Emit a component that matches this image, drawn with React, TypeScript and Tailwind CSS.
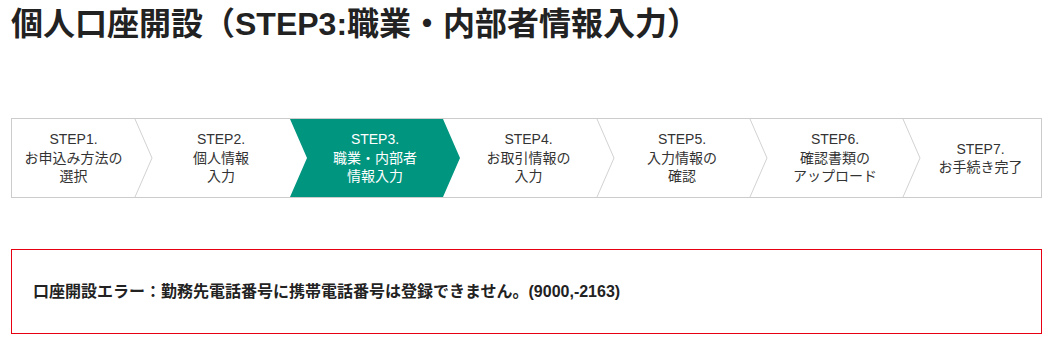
import React from "react";

type Step = {
  label: string;
  lines: string[];
  width: string;
  active?: boolean;
  first?: boolean;
  last?: boolean;
};

const steps: Step[] = [
  { label: "STEP1.", lines: ["お申込み方法の", "選択"], width: "w-[123px]", first: true },
  { label: "STEP2.", lines: ["個人情報", "入力"], width: "w-[155px]" },
  { label: "STEP3.", lines: ["職業・内部者", "情報入力"], width: "w-[153px]", active: true },
  { label: "STEP4.", lines: ["お取引情報の", "入力"], width: "w-[154px]" },
  { label: "STEP5.", lines: ["入力情報の", "確認"], width: "w-[153px]" },
  { label: "STEP6.", lines: ["確認書類の", "アップロード"], width: "w-[153px]" },
  { label: "STEP7.", lines: ["お手続き完了"], width: "w-[138px]", last: true },
];

// gray chevron drawn on the right edge of a white step
const Chevron = () => (
  <svg
    className="absolute top-0 left-full h-full w-[18px] overflow-visible"
    viewBox="0 0 18 78"
    preserveAspectRatio="none"
  >
    <polyline points="0,0 17,39 0,78" fill="white" stroke="#d2d2d2" strokeWidth="1" />
  </svg>
);

// green arrow body for the current step
const ActiveShape = () => (
  <svg
    className="absolute top-0 left-0 h-full w-[calc(100%+17px)]"
    viewBox="0 0 170 78"
    preserveAspectRatio="none"
  >
    <polygon points="0,0 153,0 170,39 153,78 0,78 17,39" fill="#00957f" />
  </svg>
);

const StepItem = ({ step, nextActive }: { step: Step; nextActive: boolean }) => (
  <div className={`relative flex h-full shrink-0 items-center justify-center ${step.width}`}>
    {step.active && <ActiveShape />}
    {!step.active && !step.last && !nextActive && <Chevron />}
    <div
      className={`relative z-10 flex h-full w-full flex-col items-center justify-center text-center text-[14px] leading-[18.5px] ${
        step.first ? "" : "pl-[17px]"
      } ${step.active ? "text-white" : "text-[#333333]"}`}
    >
      <span>{step.label}</span>
      {step.lines.map((line) => (
        <span key={line}>{line}</span>
      ))}
    </div>
  </div>
);

export default function App() {
  return (
    <div
      className="min-h-[342px] w-[1051px] bg-white pl-[11px] pr-[9px]"
      style={{ fontFamily: '"Liberation Sans", "Noto Sans CJK JP", sans-serif' }}
    >
      <h1 className="text-[32px] leading-[46px] font-bold text-[#222222] pt-[1px]">
        個人口座開設（STEP3:職業・内部者情報入力）
      </h1>

      {/* Step navigation */}
      <div className="mt-[71px] flex h-[80px] border border-solid border-[#cccccc] bg-white">
        {steps.map((step, i) => (
          <StepItem key={step.label} step={step} nextActive={!!steps[i + 1]?.active} />
        ))}
      </div>

      {/* Error message */}
      <div className="mt-[51px] flex h-[85px] items-center border border-solid border-[#e60012] pl-[21px]">
        <p className="text-[16px] font-bold text-[#222222]">
          口座開設エラー：勤務先電話番号に携帯電話番号は登録できません。(9000,-2163)
        </p>
      </div>
    </div>
  );
}
